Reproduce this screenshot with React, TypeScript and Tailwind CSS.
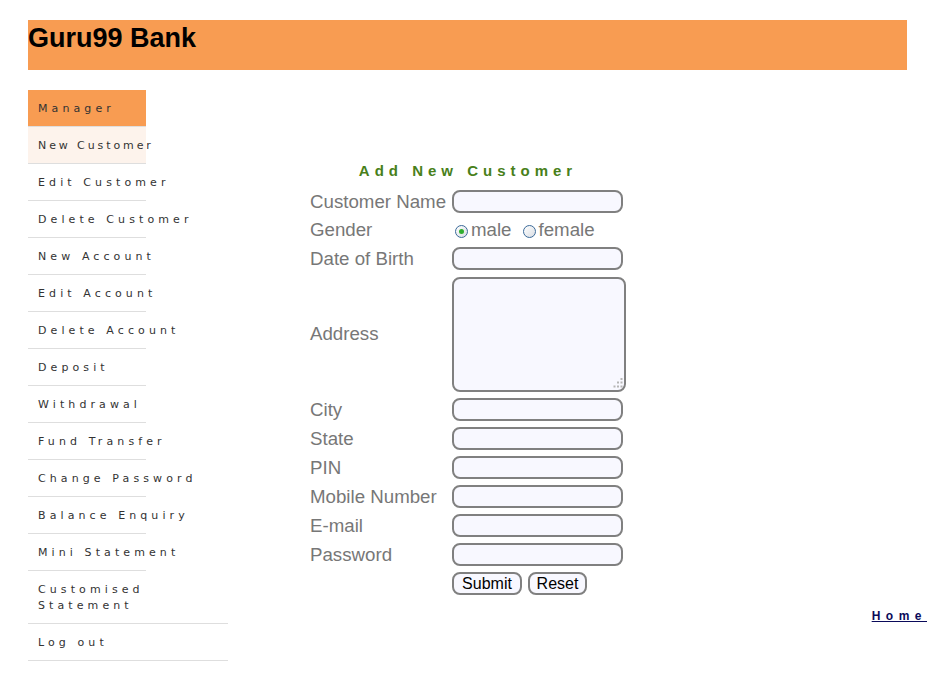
import React from "react";

const menuItems = [
  { label: "Manager", kind: "head" },
  { label: "New Customer", kind: "active" },
  { label: "Edit Customer" },
  { label: "Delete Customer" },
  { label: "New Account" },
  { label: "Edit Account" },
  { label: "Delete Account" },
  { label: "Deposit" },
  { label: "Withdrawal" },
  { label: "Fund Transfer" },
  { label: "Change Password" },
  { label: "Balance Enquiry" },
  { label: "Mini Statement" },
  { label: "Customised Statement", wide: true },
  { label: "Log out", wide: true },
];

const textRows = ["City", "State", "PIN", "Mobile Number", "E-mail", "Password"];

function Radio({ checked }: { checked?: boolean }) {
  return (
    <span className="flex h-[13px] w-[13px] items-center justify-center rounded-full border border-[#3b6a99] bg-gradient-to-br from-white to-[#d9dde3]">
      {checked && <span className="h-[5px] w-[5px] rounded-full bg-[#2fae2f]" />}
    </span>
  );
}

function TextInput() {
  return <input type="text" className="h-[23px] w-[171px] rounded-[8px] border-2 border-[#808080] bg-[#f8f8ff] px-1 outline-none" />;
}

function Label({ children }: { children: React.ReactNode }) {
  return <span className="text-[18.7px] leading-[22px] text-[#777777]">{children}</span>;
}

export default function App() {
  return (
    <div className="min-h-[695px] bg-white px-[28px] pt-[20px] font-['Liberation_Sans',Arial,sans-serif]">
      <header className="h-[50px] bg-[#f89c52]">
        <h2 className="pt-[3px] text-[27px] font-bold leading-[31px] text-black">Guru99 Bank</h2>
      </header>

      <div className="mt-[20px] flex">
        <ul className="flex w-[200px] shrink-0 flex-col font-['DejaVu_Sans',Verdana,sans-serif] text-[11px] leading-[16px] text-[#333333]">
          {menuItems.map((item) => (
            <li
              key={item.label}
              className={[
                "border-b border-[#dedede] px-[10px] pb-[9px] pt-[11px]",
                item.wide ? "w-[200px]" : "w-[118px] whitespace-nowrap",
                item.kind === "head" ? "bg-[#f89c52]" : item.kind === "active" ? "bg-[#fdf3ec]" : "bg-white",
                item.kind === "active" ? "tracking-[2.9px]" : "tracking-[4.1px]",
              ].join(" ")}
            >
              {item.label}
            </li>
          ))}
        </ul>

        <main className="flex flex-1 flex-col">
          <form className="ml-[82px] mt-[71px] w-[316px]" onSubmit={(e) => e.preventDefault()}>
            <p className="text-center text-[15px] font-bold leading-[20px] tracking-[5px] text-[#48801a]">Add New Customer</p>
            <div className="mt-[9px] grid grid-cols-[142px_174px] items-center gap-y-[6px]">
              <Label>Customer Name</Label>
              <TextInput />

              <Label>Gender</Label>
              <div className="flex h-[21px] items-center text-[18.7px] text-[#777777]">
                <span className="ml-[3px] mr-[3px] mt-[2px]">
                  <Radio checked />
                </span>
                <span>male</span>
                <span className="ml-[11px] mr-[3px] mt-[2px]">
                  <Radio />
                </span>
                <span>female</span>
              </div>

              <Label>Date of Birth</Label>
              <TextInput />

              <Label>Address</Label>
              <div className="relative mt-[1px] h-[115px] w-[174px]">
                <textarea className="block h-[115px] w-[174px] resize-none rounded-[8px] border-2 border-[#808080] bg-[#f8f8ff] outline-none" />
                <svg className="pointer-events-none absolute bottom-[4px] right-[3px]" width="10" height="10" viewBox="0 0 10 10">
                  <g fill="#b5b5b5">
                    <rect x="7.5" y="0" width="2" height="2" />
                    <rect x="4" y="3.5" width="2" height="2" />
                    <rect x="7.5" y="3.5" width="2" height="2" />
                    <rect x="0.5" y="7.5" width="2" height="2" />
                    <rect x="4" y="7.5" width="2" height="2" />
                    <rect x="7.5" y="7.5" width="2" height="2" />
                  </g>
                </svg>
              </div>

              {textRows.map((row) => (
                <React.Fragment key={row}>
                  <Label>{row}</Label>
                  <TextInput />
                </React.Fragment>
              ))}

              <span />
              <div className="flex gap-[6px]">
                <button type="submit" className="h-[23px] w-[70px] rounded-[8px] border-2 border-[#808080] bg-[#f8f8ff] text-[16px] leading-[18px] text-black">
                  Submit
                </button>
                <button type="reset" className="h-[23px] w-[59px] rounded-[8px] border-2 border-[#808080] bg-[#f8f8ff] text-[16px] leading-[18px] text-black">
                  Reset
                </button>
              </div>
            </div>
          </form>

          <div className="-mr-[20px] mt-[14px] text-right text-[12px] leading-[14px]">
            <a href="#" className="font-bold tracking-[5.5px] text-[#0a0a5a] underline">
              Home
            </a>
          </div>
        </main>
      </div>
    </div>
  );
}
